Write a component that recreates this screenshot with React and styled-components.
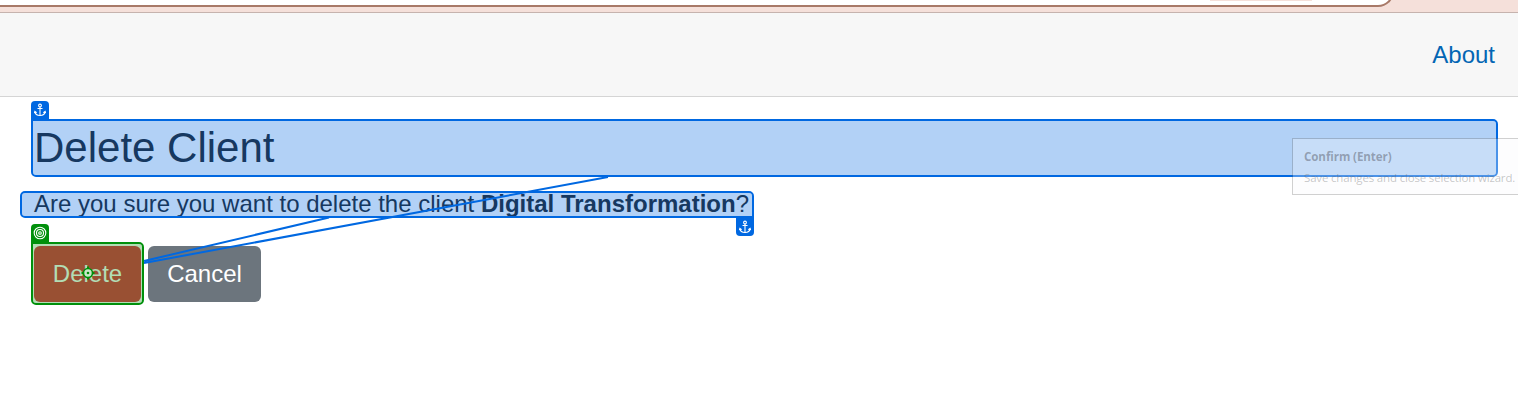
import React from "react";
import styled, { createGlobalStyle, css } from "styled-components";

const BLUE = "#0068e1";
const GREEN = "#00900b";

const GlobalStyle = createGlobalStyle`
  * { box-sizing: border-box; }
  body {
    margin: 0;
    background: #fff;
    color: #212529;
    font-family: "Liberation Sans", Arial, sans-serif;
    overflow: hidden;
  }
`;

const Page = styled.div`
  position: relative;
  height: 404px;
  overflow: hidden;
`;

const BrowserBar = styled.div`
  height: 13px;
  overflow: hidden;
  display: flex;
  align-items: flex-start;
  background: #f5e0da;
  border-bottom: 1px solid #c6b3ae;
`;

const AddressField = styled.div`
  width: 1394px;
  height: 32px;
  display: flex;
  justify-content: flex-end;
  margin-top: -25px;
  padding: 25px 80px 0 0;
  background: #fff;
  border-bottom: 2px solid #a87968;
  border-right: 2px solid #a87968;
  border-bottom-right-radius: 16px;
`;

const AddressChip = styled.div`
  width: 102px;
  height: 1px;
  background: #f5e0da;
`;

const Nav = styled.nav`
  height: 84px;
  display: flex;
  align-items: center;
  justify-content: flex-end;
  padding-right: 23px;
  background: #f7f7f7;
  border-bottom: 1px solid #d5d5d5;
`;

const NavLink = styled.a`
  color: #0366b4;
  font-size: 24px;
  line-height: 28px;
`;

const Main = styled.main`
  display: flex;
  flex-direction: column;
  align-items: flex-start;
  padding: 22px 20px 0;
`;

const highlight = css`
  position: relative;
  border-radius: 5px;
  &::after {
    content: "";
    position: absolute;
    inset: 0;
    border: 2px solid ${(p) => p.$tone};
    border-radius: ${(p) => p.$radius};
    background: ${(p) => p.$tint};
    background-clip: padding-box;
  }
`;

const Title = styled.h1`
  ${highlight}
  align-self: stretch;
  height: 58px;
  margin: 0 0 0 11px;
  padding-left: 3px;
  font-size: 42px;
  font-weight: 400;
  line-height: 58px;
`;

const Question = styled.p`
  ${highlight}
  width: 734px;
  height: 27px;
  margin: 14px 0 0;
  padding-left: 14px;
  font-size: 24px;
  line-height: 26px;
  white-space: nowrap;
`;

const Actions = styled.div`
  display: flex;
  align-items: center;
  gap: 4px;
  margin: 24px 0 0 11px;
`;

const Target = styled.div`
  ${highlight}
  width: 113px;
  height: 63px;
  padding: 4px 3px 3px;
`;

const Button = styled.button`
  display: block;
  width: ${(p) => p.$width}px;
  height: 56px;
  padding: 0;
  border: 0;
  border-radius: 6px;
  background: ${(p) => p.$color};
  color: #fff;
  font: 24px/56px "Liberation Sans", Arial, sans-serif;
`;

const Badge = styled.span`
  position: absolute;
  z-index: 1;
  width: 18px;
  height: 18px;
  display: flex;
  align-items: center;
  justify-content: center;
  background: ${(p) => p.$tone};
  color: #fff;
  ${(p) =>
    p.$below
      ? "right: 0; top: 100%; border-radius: 0 0 4px 4px;"
      : "left: 0; bottom: 100%; border-radius: 4px 4px 0 0;"}
`;

const Connectors = styled.svg`
  position: absolute;
  left: 0;
  top: 0;
  z-index: 2;
  pointer-events: none;
`;

const Tooltip = styled.aside`
  position: absolute;
  z-index: 3;
  left: 1292px;
  top: 138px;
  width: 236px;
  height: 57px;
  padding: 8px 11px;
  border: 1px solid rgba(100, 100, 100, 0.3);
  background: rgba(247, 249, 252, 0.3);
  background-clip: padding-box;
  color: rgba(95, 95, 95, 0.36);
  font: 11.5px/19px "Open Sans", "Noto Sans", sans-serif;
  white-space: nowrap;
`;

const TooltipTitle = styled.strong`
  display: block;
  margin-bottom: 2px;
  color: rgba(70, 70, 80, 0.42);
  font-size: 11.6px;
  font-weight: 700;
  letter-spacing: -0.1px;
`;

const TooltipText = styled.span`
  display: block;
  letter-spacing: -0.17px;
`;

const AnchorIcon = () => (
  <svg width="12" height="14" viewBox="0 0 12 14" fill="none" stroke="currentColor" strokeWidth="1.1">
    <circle cx="6" cy="2.5" r="1.4" />
    <path d="M6 3.900V12.700M3.500 5.500h5" />
    <path d="M.9 8.600C1.200 11.300 3.200 12.500 6 12.500s4.800-1.200 5.100-3.900M.3 10.200.9 8.400l1.800 1.200M11.700 10.200l-.6-1.800-1.800 1.200" />
  </svg>
);

const TargetIcon = () => (
  <svg width="14" height="14" viewBox="0 0 14 14" fill="none" stroke="currentColor" strokeWidth="1.1">
    <circle cx="7" cy="7" r="5.800" />
    <circle cx="7" cy="7" r="3.500" />
    <circle cx="7" cy="7" r="1.300" />
  </svg>
);

const blueTone = { $tone: BLUE, $tint: "rgba(0, 104, 225, 0.3)" };

export default function App() {
  return (
    <Page>
      <GlobalStyle />
      <BrowserBar>
        <AddressField>
          <AddressChip />
        </AddressField>
      </BrowserBar>
      <Nav>
        <NavLink>About</NavLink>
      </Nav>
      <Main>
        <Title {...blueTone} $radius="0 5px 5px 5px">
          Delete Client
          <Badge $tone={BLUE}>
            <AnchorIcon />
          </Badge>
        </Title>
        <Question {...blueTone} $radius="5px 5px 0 5px">
          Are you sure you want to delete the client <strong>Digital Transformation</strong>?
          <Badge $tone={BLUE} $below>
            <AnchorIcon />
          </Badge>
        </Question>
        <Actions>
          <Target $tone={GREEN} $tint="rgba(0, 144, 11, 0.3)" $radius="0 5px 5px 5px">
            <Button $width={107} $color="#dc3545">
              Delete
            </Button>
            <Badge $tone={GREEN}>
              <TargetIcon />
            </Badge>
          </Target>
          <Button $width={113} $color="#6c757d">
            Cancel
          </Button>
        </Actions>
      </Main>
      <Connectors width="1518" height="404" fill="none">
        <path d="M144 261 329 217.500M144 263 608 177" stroke={BLUE} strokeWidth="2" />
        <circle cx="88" cy="273" r="4.500" stroke={GREEN} strokeWidth="1.600" fill="#c8e8c9" />
        <circle cx="88" cy="273" r="1.300" fill={GREEN} />
        <path d="M88 266.500v2M88 277.500v2M81.500 273h2M92.500 273h2" stroke={GREEN} strokeWidth="2" />
      </Connectors>
      <Tooltip>
        <TooltipTitle>Confirm (Enter)</TooltipTitle>
        <TooltipText>Save changes and close selection wizard.</TooltipText>
      </Tooltip>
    </Page>
  );
}
